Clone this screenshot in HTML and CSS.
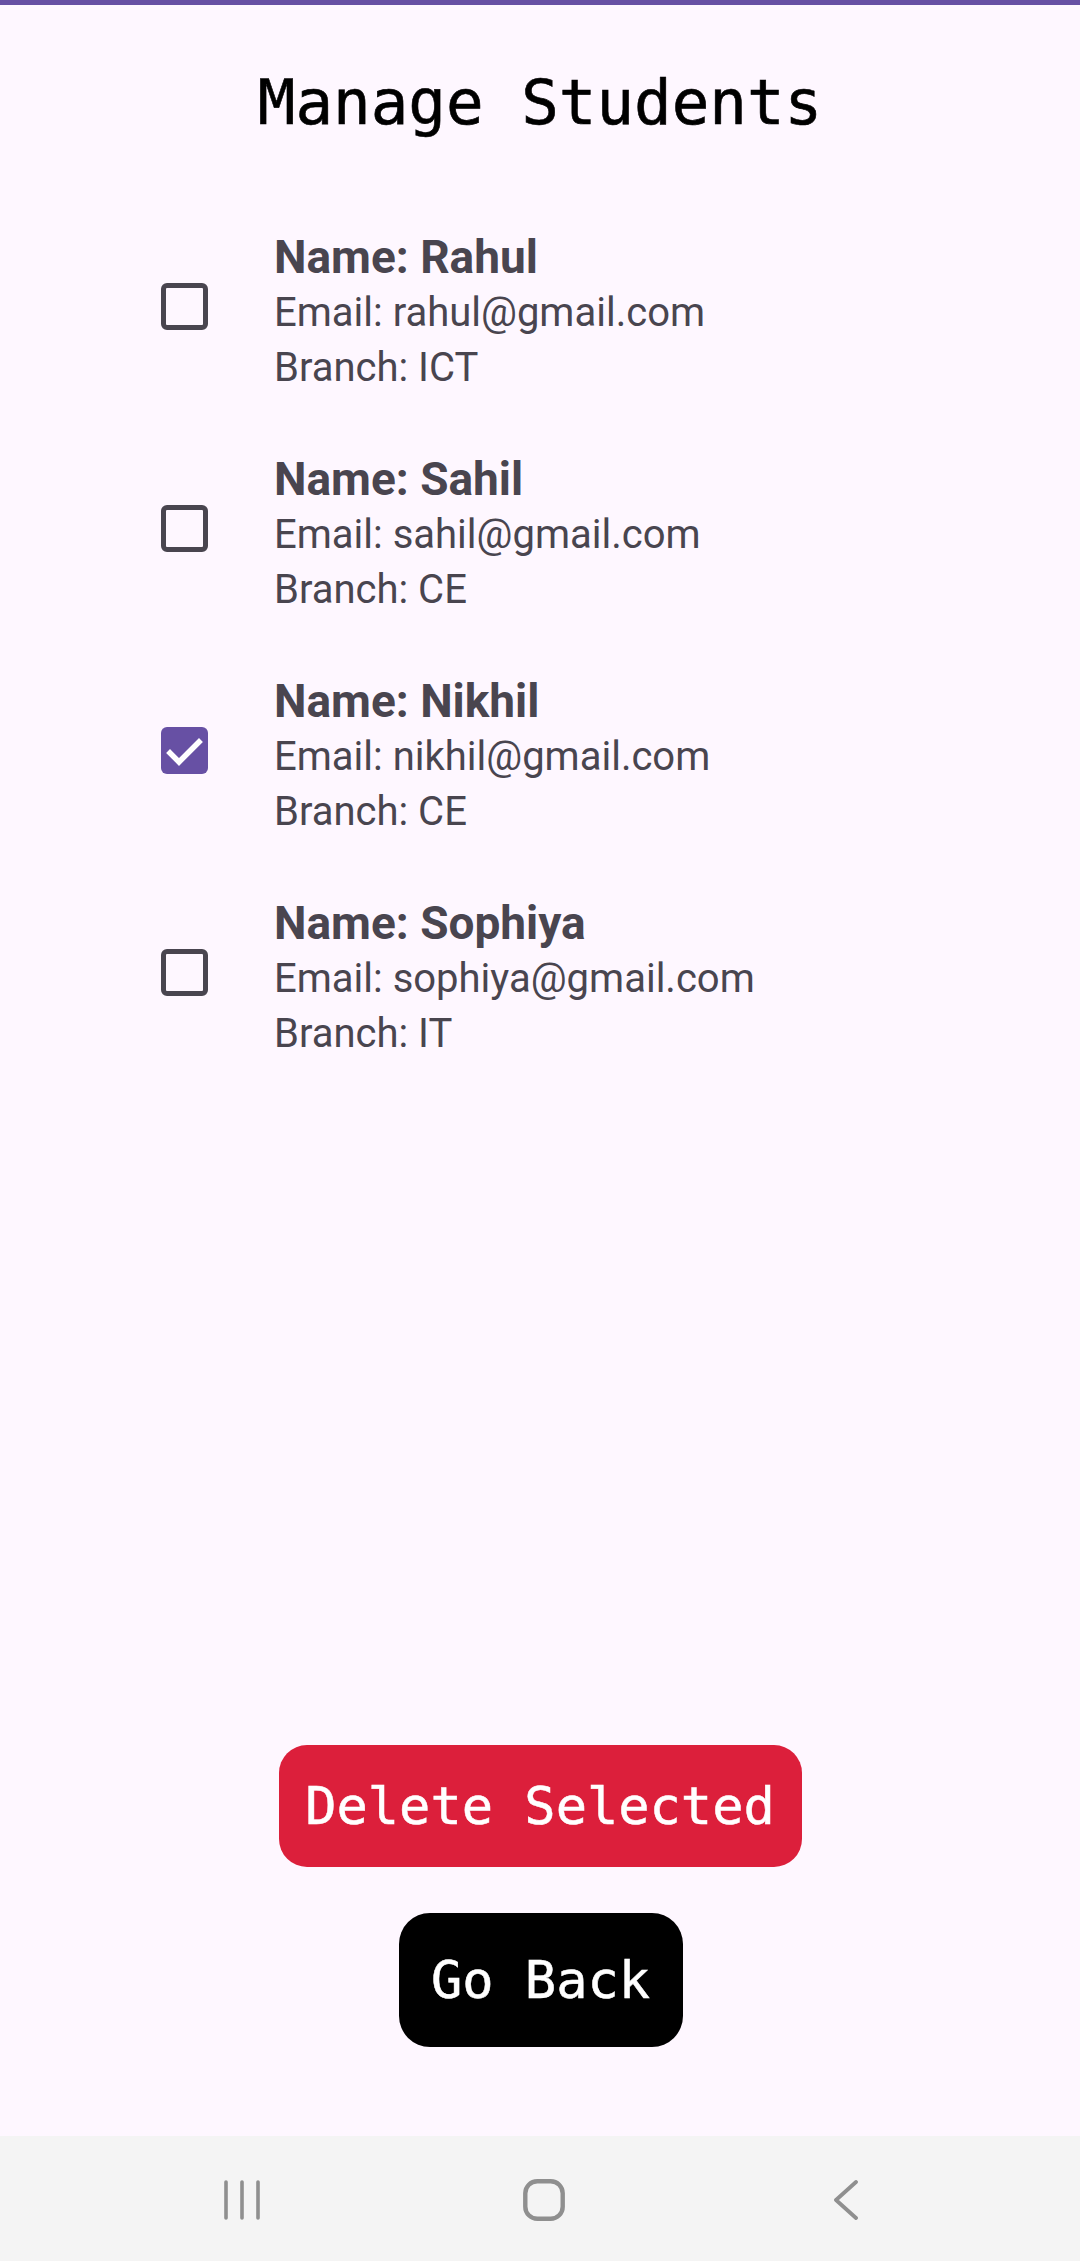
FILE: index.html
```html
<!DOCTYPE html>
<html lang="en">
<head>
<meta charset="utf-8">
<title>Manage Students</title>
<link rel="stylesheet" href="styles.css">
</head>
<body>
<div class="screen">
  <div class="topbar"></div>
  <h1 class="title">Manage Students</h1>
  <div class="list">
    <div class="row">
      <span class="checkbox"></span>
      <div class="info">
        <div class="name">Name: Rahul</div>
        <div class="line">Email: rahul@gmail.com</div>
        <div class="line">Branch: ICT</div>
      </div>
    </div>
    <div class="row">
      <span class="checkbox"></span>
      <div class="info">
        <div class="name">Name: Sahil</div>
        <div class="line">Email: sahil@gmail.com</div>
        <div class="line">Branch: CE</div>
      </div>
    </div>
    <div class="row">
      <span class="checkbox checked">
        <svg viewBox="0 0 47 47" width="47" height="47"><polyline points="9,26 18,35 38,15" fill="none" stroke="#ffffff" stroke-width="5.5" stroke-linecap="square"/></svg>
      </span>
      <div class="info">
        <div class="name">Name: Nikhil</div>
        <div class="line">Email: nikhil@gmail.com</div>
        <div class="line">Branch: CE</div>
      </div>
    </div>
    <div class="row">
      <span class="checkbox"></span>
      <div class="info">
        <div class="name">Name: Sophiya</div>
        <div class="line">Email: sophiya@gmail.com</div>
        <div class="line">Branch: IT</div>
      </div>
    </div>
  </div>
  <div class="spacer"></div>
  <div class="actions">
    <button class="btn btn-delete">Delete Selected</button>
    <button class="btn btn-back">Go Back</button>
  </div>
  <nav class="navbar">
    <svg class="nav-recent" viewBox="0 0 36 40" width="36" height="40"><g stroke="#8f8f8f" stroke-width="3.6" stroke-linecap="round"><line x1="2" y1="2" x2="2" y2="38"/><line x1="18" y1="2" x2="18" y2="38"/><line x1="34" y1="2" x2="34" y2="38"/></g></svg>
    <svg class="nav-home" viewBox="0 0 42 42" width="42" height="42"><rect x="2.3" y="2.3" width="37.4" height="37.4" rx="12" fill="none" stroke="#8f8f8f" stroke-width="4.4"/></svg>
    <svg class="nav-back" viewBox="0 0 24 40" width="24" height="40"><polyline points="22,2 2,20 22,38" fill="none" stroke="#8f8f8f" stroke-width="3.8" stroke-linecap="round" stroke-linejoin="round"/></svg>
  </nav>
</div>
</body>
</html>
```

FILE: styles.css
```css
* {
  box-sizing: border-box;
}

html, body {
  margin: 0;
  padding: 0;
  background: #fef7ff;
}

.screen {
  width: 1080px;
  height: 2261px;
  display: flex;
  flex-direction: column;
  background: #fef7ff;
}

.topbar {
  height: 5px;
  background: #6750a4;
  flex: none;
}

.title {
  margin: 66px 0 0 0;
  font-family: "DejaVu Sans Mono", "Liberation Mono", monospace;
  font-weight: normal;
  font-size: 62.5px;
  line-height: 63px;
  color: #000000;
  text-align: center;
  -webkit-text-stroke: 0.6px #000000;
}

.list {
  margin-top: 94px;
  display: flex;
  flex-direction: column;
  gap: 55px;
}

.row {
  display: flex;
  align-items: center;
  padding-left: 161px;
}

.checkbox {
  width: 47px;
  height: 47px;
  border: 5px solid #49454f;
  border-radius: 6px;
  margin-bottom: 11px;
  flex: none;
  display: block;
}

.checkbox.checked {
  border: none;
  background: #6750a4;
}

.checkbox svg {
  display: block;
}

.info {
  margin-left: 66px;
  font-family: Roboto, "Liberation Sans", sans-serif;
  color: #49454f;
}

.name {
  font-weight: bold;
  font-size: 46px;
  line-height: 58px;
}

.line {
  font-size: 40px;
  line-height: 54.5px;
}

.spacer {
  flex: 1;
}

.actions {
  display: flex;
  flex-direction: column;
  align-items: center;
  gap: 46px;
  margin-bottom: 89px;
}

.btn {
  border: none;
  padding: 0;
  margin: 0;
  font-family: "DejaVu Sans Mono", "Liberation Mono", monospace;
  font-size: 52px;
  color: #ffffff;
  text-align: center;
  -webkit-text-stroke: 0.5px #ffffff;
}

.btn-delete {
  width: 523px;
  height: 122px;
  line-height: 122px;
  background: #dc1f3b;
  border-radius: 28px;
}

.btn-back {
  width: 284px;
  height: 134px;
  line-height: 134px;
  background: #000000;
  border-radius: 31px;
  margin-left: 1px;
}

.navbar {
  height: 125px;
  flex: none;
  background: #f4f4f4;
  display: flex;
  align-items: center;
  padding-left: 224px;
  padding-top: 3px;
}

.nav-recent {
  margin-right: 263px;
}

.nav-home {
  margin-right: 269px;
}
```
